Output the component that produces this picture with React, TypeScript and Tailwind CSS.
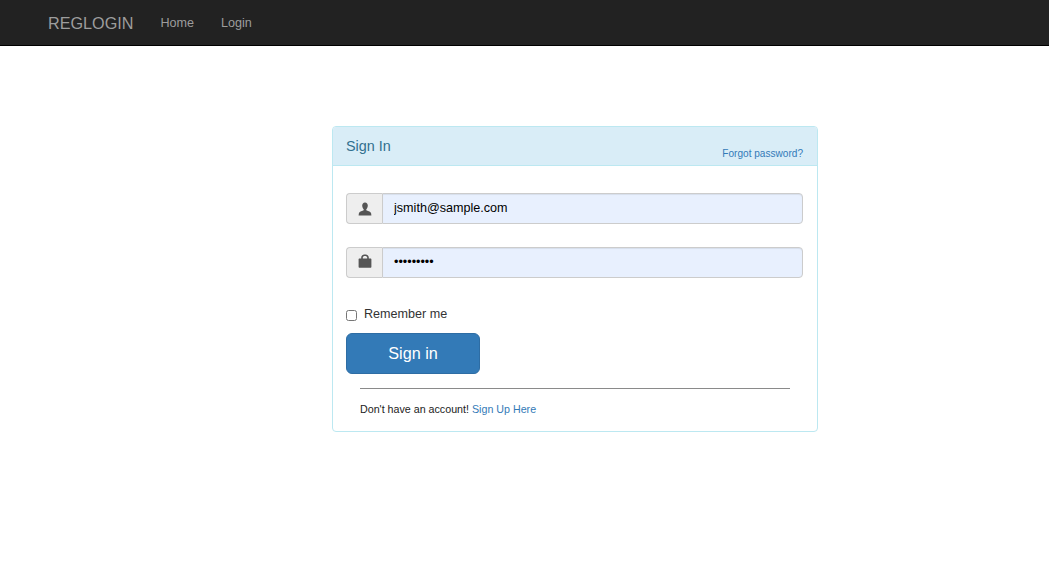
const UserIcon = () => (
  <svg width="14" height="14" viewBox="0 0 14 14" fill="#555">
    <path d="M7 0.5C5.2 0.5 4.2 1.9 4.2 3.6C4.2 5.1 4.8 6.4 5.6 7.2C5.9 7.6 5.8 8.2 5.2 8.5C3.6 9.2 1.2 9.8 0.9 11.2L0.6 13.5H13.4L13.1 11.2C12.8 9.8 10.4 9.2 8.8 8.5C8.2 8.2 8.1 7.6 8.4 7.2C9.2 6.4 9.8 5.1 9.8 3.6C9.8 1.9 8.8 0.5 7 0.5Z" />
  </svg>
);

const LockIcon = () => (
  <svg width="14" height="14" viewBox="0 0 14 14" fill="#555" className="-mt-[3px]">
    <path d="M3.2 5V3.4C3.2 1.6 4.8 0.4 7 0.4C9.2 0.4 10.8 1.6 10.8 3.4V5H9.2V3.5C9.2 2.5 8.3 1.9 7 1.9C5.7 1.9 4.8 2.5 4.8 3.5V5Z" />
    <path d="M1.6 4.4C1 4.4 0.6 4.8 0.6 5.4V12.8C0.6 13.4 1 13.8 1.6 13.8H12.4C13 13.8 13.4 13.4 13.4 12.8V5.4C13.4 4.8 13 4.4 12.4 4.4Z" />
  </svg>
);

const Field = ({ icon, type, value }: { icon: React.ReactNode; type: string; value: string }) => (
  <div className="flex h-[31px] w-[457px]">
    <span className="flex w-[36px] shrink-0 items-center justify-center rounded-l-[4px] border border-r-0 border-[#ccc] bg-[#eee]">
      {icon}
    </span>
    <input
      readOnly
      type={type}
      value={value}
      className="min-w-0 flex-1 rounded-r-[4px] border border-[#ccc] bg-[#e8f0fe] px-[11px] text-[12.6px] text-black shadow-[inset_0_1px_1px_rgba(0,0,0,0.075)] outline-none"
    />
  </div>
);

export default function App() {
  return (
    <div className="min-h-[575px] bg-white font-['Liberation_Sans',Arial,sans-serif] text-[12.6px] text-[#333]">
      <nav className="flex h-[46px] items-center border-b border-black bg-[#222] pl-[48px] pt-[1px]">
        <a className="mr-[27px] text-[16.2px] text-[#9d9d9d]">REGLOGIN</a>
        <a className="mr-[27px] text-[#9d9d9d]">Home</a>
        <a className="text-[#9d9d9d]">Login</a>
      </nav>

      <div className="ml-[332px] mt-[80px] w-[486px] rounded-[4px] border border-[#bce8f1]">
        <div className="flex h-[39px] items-start justify-between rounded-t-[3px] border-b border-[#bce8f1] bg-[#d9edf7] pl-[13px] pr-[14px]">
          <span className="mt-[10px] text-[14.4px] leading-[18px] text-[#31708f]">Sign In</span>
          <a className="mt-[20px] text-[10.08px] leading-[14px] text-[#337ab7]">Forgot password?</a>
        </div>

        <div className="px-[13px] pt-[27px]">
          <Field icon={<UserIcon />} type="text" value="jsmith@sample.com" />
          <div className="mt-[23px]">
            <Field icon={<LockIcon />} type="password" value="password1" />
          </div>

          <label className="mt-[26px] flex h-[20px] items-center">
            <input type="checkbox" className="mt-[3px] h-[11px] w-[11px] appearance-auto" />
            <span className="ml-[7px]">Remember me</span>
          </label>

          <button className="mt-[9px] block h-[41px] w-[134px] rounded-[6px] border border-[#2e6da4] bg-[#337ab7] text-[16.2px] text-white">
            Sign in
          </button>

          <div className="mx-[14px] mt-[14px] h-[14px] w-[430px] border-t border-[#8a8a8a]" />

          <p className="mx-[14px] pb-[14px] text-[10.7px] leading-[15px] text-[#222]">
            Don't have an account! <a className="text-[#337ab7]">Sign Up Here</a>
          </p>
        </div>
      </div>
    </div>
  );
}
